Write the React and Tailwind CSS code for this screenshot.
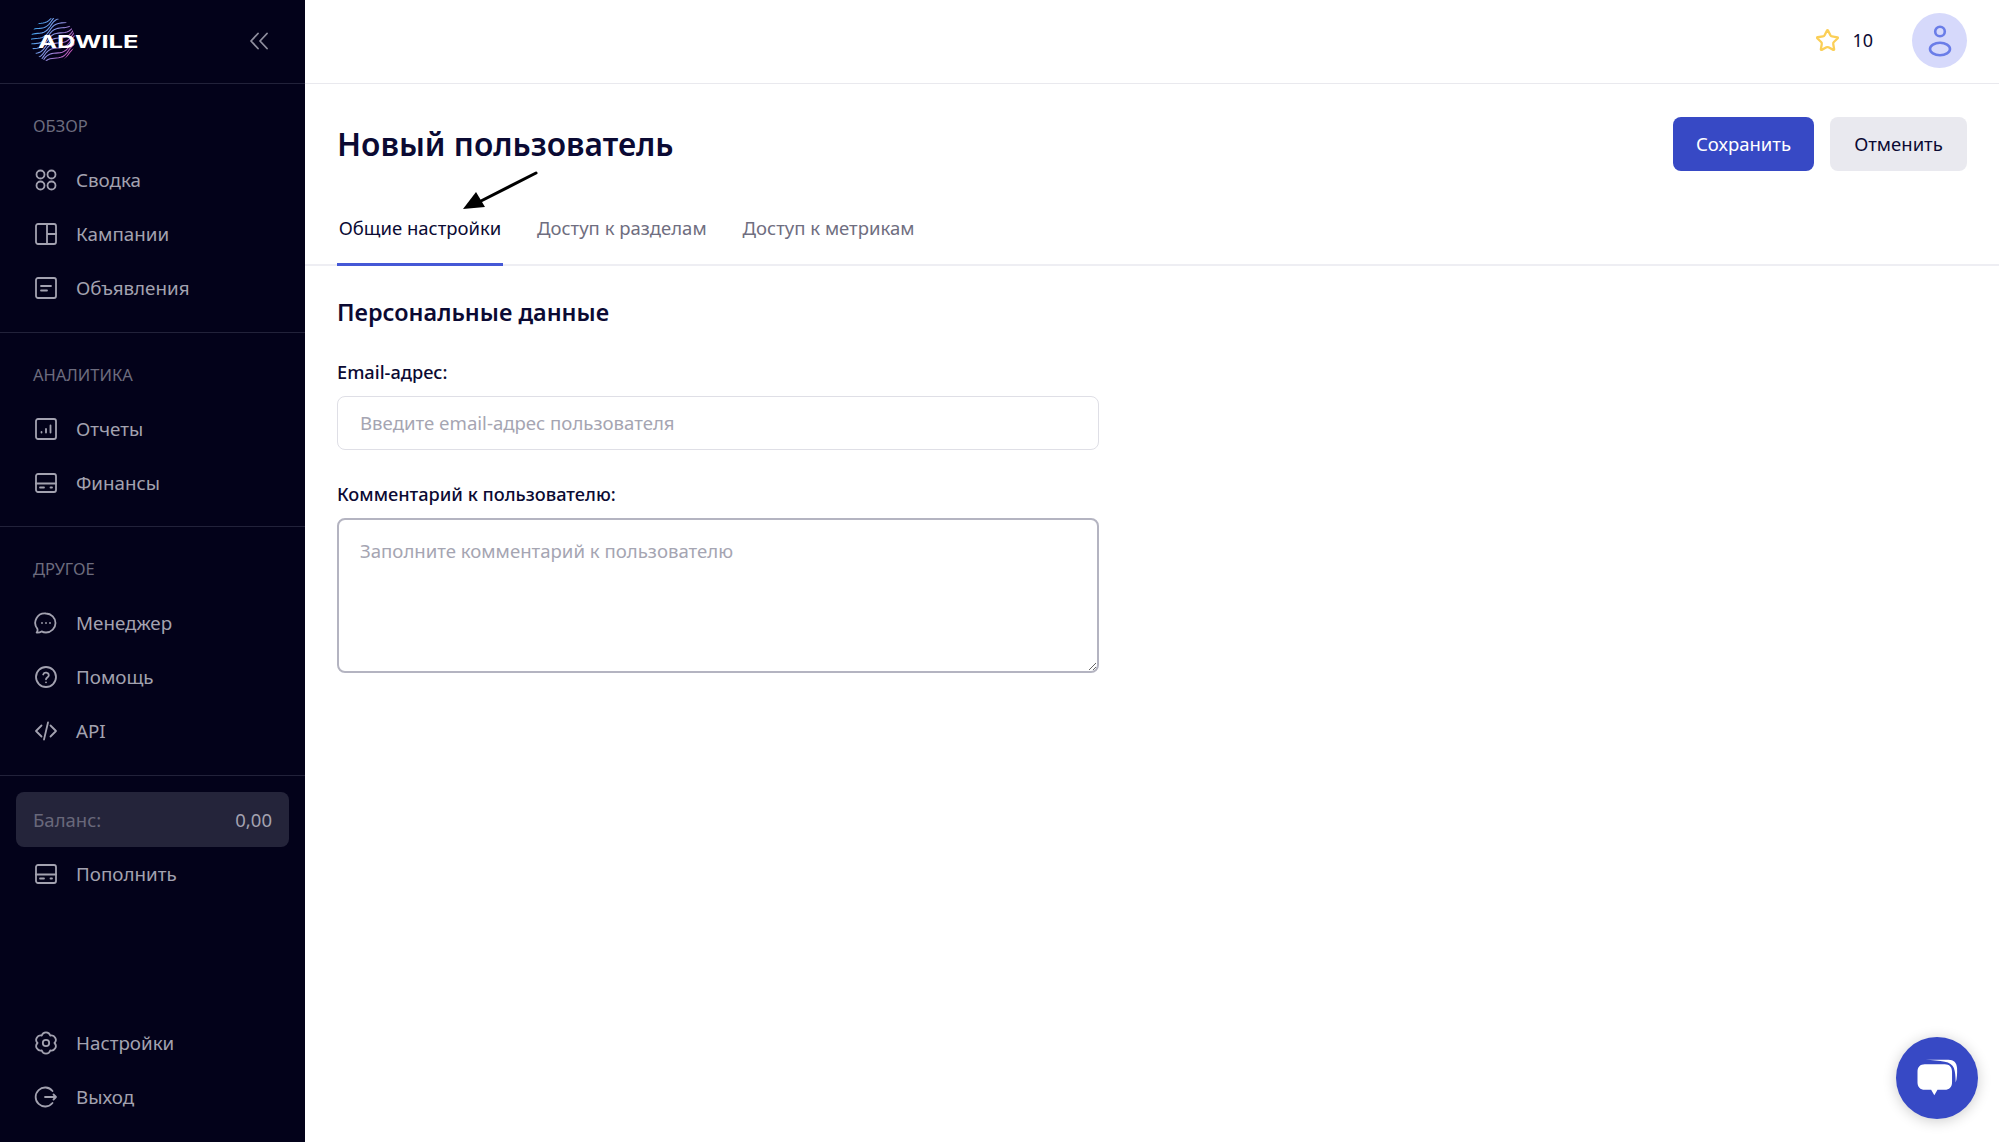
import React from "react";
import { Star } from "lucide-react";

const font = "font-['Noto_Sans',sans-serif]";

function Icon({ children }) {
  return (
    <svg width="24" height="24" viewBox="0 0 24 24" fill="none" stroke="currentColor" strokeWidth="1.8" strokeLinecap="round" strokeLinejoin="round" className="shrink-0">
      {children}
    </svg>
  );
}

// six-lobed outline for the settings icon
function flowerPath() {
  let d = "";
  for (let k = 0; k < 6; k++) {
    const a = ((-60 + 60 * k) * Math.PI) / 180;
    const x = (12 + 8.5 * Math.cos(a)).toFixed(2);
    const y = (12 + 8.5 * Math.sin(a)).toFixed(2);
    d += k === 0 ? `M${x} ${y}` : `A4.4 4.4 0 0 1 ${x} ${y}`;
  }
  const sx = (12 + 8.5 * Math.cos((-60 * Math.PI) / 180)).toFixed(2);
  const sy = (12 + 8.5 * Math.sin((-60 * Math.PI) / 180)).toFixed(2);
  return `${d}A4.4 4.4 0 0 1 ${sx} ${sy}Z`;
}

const icons = {
  summary: (
    <>
      <circle cx="6.5" cy="6.5" r="4" />
      <circle cx="17.5" cy="6.5" r="4" />
      <circle cx="6.5" cy="17.5" r="4" />
      <circle cx="17.5" cy="17.5" r="4" />
    </>
  ),
  campaigns: (
    <>
      <rect x="2" y="2" width="20" height="20" rx="2" />
      <path d="M13 2v20M13 12h9" />
    </>
  ),
  ads: (
    <>
      <rect x="2" y="2" width="20" height="20" rx="2" />
      <path d="M7 10h10M7 14.5h6" />
    </>
  ),
  reports: (
    <>
      <rect x="2" y="2" width="20" height="20" rx="2" />
      <path d="M7.5 15.5v-.5M12 15.5V12M16.5 15.5V8.5" />
    </>
  ),
  card: (
    <>
      <rect x="2" y="3" width="20" height="18" rx="2" />
      <path d="M2 12.5h20M6 16.5h4M16.5 16.5h1.5" />
    </>
  ),
  manager: (
    <>
      <path d="M12 2.5a9.5 9.5 0 0 1 0 19c-1.6 0-3.1-.4-4.4-1.1-1.4.9-3 1.3-5 1.1 1-1.1 1.2-2.3.8-3.6A9.5 9.5 0 0 1 12 2.5Z" />
      <path d="M8 12h.01M12 12h.01M16 12h.01" />
    </>
  ),
  help: (
    <>
      <circle cx="12" cy="12" r="10" />
      <path d="M9.2 9.5a2.9 2.9 0 0 1 5.6.8c0 2-2.8 2.4-2.8 4" />
      <path d="M12 17.3h.01" />
    </>
  ),
  api: <path d="M7.5 6.5 2 12l5.5 5.5M16.5 6.5 22 12l-5.5 5.5M14 3.5 10 20.5" />,
  settings: (
    <>
      <path d={flowerPath()} />
      <circle cx="12" cy="12" r="3.2" />
    </>
  ),
  logout: (
    <>
      <path d="M18.5 6a9.5 9.5 0 1 0 0 12" />
      <path d="M11 12h11M19.5 9.5 22 12l-2.5 2.5" />
    </>
  ),
};

function NavItem({ icon, label }) {
  return (
    <div className="h-[54px] pl-[34px] flex items-center gap-[18px] text-[#a3a2b0] text-[18.8px]">
      <Icon>{icons[icon]}</Icon>
      <span>{label}</span>
    </div>
  );
}

function NavSection({ title, items, tight }) {
  return (
    <div className={`pt-[32px] border-b border-[#22223a] ${tight ? "pb-[16px]" : "pb-[17px]"}`}>
      <div className="pl-[33px] mb-[17px] h-[20px] leading-[20px] text-[16.5px] text-[#6d6c7e]">{title}</div>
      {items.map((item) => (
        <NavItem key={item.label} {...item} />
      ))}
    </div>
  );
}

// the fingerprint mark behind the wordmark
function LogoMark() {
  const lines = [];
  for (let row = 0; row < 14; row++) {
    let d = "";
    for (let x = -26; x <= 26; x += 2) {
      const y = -25 + row * 3.8 + 2.4 * Math.sin(x / 5 + row * 0.7);
      d += (d ? "L" : "M") + x + " " + y.toFixed(1);
    }
    lines.push(d);
  }
  return (
    <svg width="46" height="46" viewBox="-23 -23 46 46" className="absolute left-[30px] top-[17px]">
      <defs>
        <linearGradient id="fp" gradientUnits="userSpaceOnUse" x1="-14" y1="-18" x2="12" y2="22">
          <stop offset="0" stopColor="#3fa3ea" />
          <stop offset="0.5" stopColor="#8d8fe0" />
          <stop offset="1" stopColor="#c446a8" />
        </linearGradient>
        <clipPath id="fpClip">
          <circle cx="0" cy="0" r="22" />
        </clipPath>
      </defs>
      <g clipPath="url(#fpClip)" fill="none" stroke="url(#fp)" strokeWidth="1.1">
        {lines.map((d) => (
          <path key={d} d={d} transform="rotate(-30)" />
        ))}
      </g>
    </svg>
  );
}

function Sidebar() {
  return (
    <aside className="w-[305px] shrink-0 bg-[#03021a] flex flex-col min-h-[1142px]">
      <div className="relative h-[84px] border-b border-[#22223a] flex items-center justify-between pl-[38px] pr-[36px]">
        <LogoMark />
        <span className="relative font-['Inter',sans-serif] font-bold text-[18px] leading-none text-white origin-left scale-x-[1.42]">ADWILE</span>
        <svg width="20" height="18" viewBox="0 0 20 18" fill="none" stroke="#8f8e9e" strokeWidth="1.8" strokeLinecap="round" strokeLinejoin="round" className="mb-[2px]">
          <path d="M9 1.5 2 9l7 7.5M18 1.5 11 9l7 7.5" />
        </svg>
      </div>
      <NavSection
        title="ОБЗОР"
        items={[
          { icon: "summary", label: "Сводка" },
          { icon: "campaigns", label: "Кампании" },
          { icon: "ads", label: "Объявления" },
        ]}
      />
      <NavSection
        tight
        title="АНАЛИТИКА"
        items={[
          { icon: "reports", label: "Отчеты" },
          { icon: "card", label: "Финансы" },
        ]}
      />
      <NavSection
        title="ДРУГОЕ"
        items={[
          { icon: "manager", label: "Менеджер" },
          { icon: "help", label: "Помощь" },
          { icon: "api", label: "API" },
        ]}
      />
      <div className="mt-[16px] mx-[16px] h-[55px] rounded-lg bg-[#24243a] px-[17px] flex items-center justify-between text-[18.5px]">
        <span className="text-[#69687a]">Баланс:</span>
        <span className="text-[#a3a2b0]">0,00</span>
      </div>
      <NavItem icon="card" label="Пополнить" />
      <div className="mt-auto pb-[18px]">
        <NavItem icon="settings" label="Настройки" />
        <NavItem icon="logout" label="Выход" />
      </div>
    </aside>
  );
}

function Field({ label, children }) {
  return (
    <div>
      <div className="text-[18.2px] leading-[24px] font-medium text-[#0b0a33] mb-[12px]">{label}</div>
      {children}
    </div>
  );
}

export default function App() {
  return (
    <div className={`${font} flex bg-white h-[1142px] overflow-hidden`}>
      <Sidebar />
      <main className="relative flex-1 min-w-0">
        <header className="h-[84px] pb-[2px] border-b border-[#e9e9ee] flex items-center justify-end pr-[32px]">
          <Star size={25} strokeWidth={2.2} className="text-[#fbcf57]" />
          <span className="ml-[12px] mr-[39px] text-[18px] text-[#0b0a33]">10</span>
          <div className="w-[55px] h-[55px] rounded-full bg-[#d6d9fb] flex items-center justify-center">
            <svg width="26" height="32" viewBox="0 0 26 32" fill="none" stroke="#6a7de8" strokeWidth="2.6">
              <circle cx="13" cy="6.5" r="4.8" />
              <ellipse cx="13" cy="24" rx="10" ry="6.2" />
            </svg>
          </div>
        </header>

        <div className="pl-[32px] pr-[32px] pt-[33px] flex items-center justify-between">
          <h1 className="text-[31.7px] leading-[54px] font-semibold text-[#0b0a33]">Новый пользователь</h1>
          <div className="flex gap-[16px]">
            <button className="w-[141px] h-[54px] rounded-lg bg-[#3749c5] text-white text-[18.5px]">Сохранить</button>
            <button className="w-[137px] h-[54px] rounded-lg bg-[#e9e9ef] text-[#0b0a33] text-[18.5px]">Отменить</button>
          </div>
        </div>

        <div className="mt-[24px] px-[32px] border-b-2 border-[#eeeef3] flex gap-[34px] h-[71px] text-[18.5px]">
          <div className="relative w-[166px] text-center pt-[19px] text-[#0b0a33]">
            Общие настройки
            <div className="absolute left-0 right-0 bottom-[-2px] h-[3px] bg-[#4558d6]" />
          </div>
          <div className="pt-[19px] text-[#6f6e80]">Доступ к разделам</div>
          <div className="ml-[2px] pt-[19px] text-[#6f6e80]">Доступ к метрикам</div>
        </div>

        <div className="px-[32px] pt-[29px]">
          <h2 className="text-[23.4px] leading-[34px] font-semibold text-[#0b0a33] mb-[31px]">Персональные данные</h2>
          <div className="w-[762px] flex flex-col gap-[32px]">
            <Field label="Email-адрес:">
              <input
                placeholder="Введите email-адрес пользователя"
                className="block w-full h-[54px] rounded-lg border border-[#dfdfe6] px-[22px] pb-[2px] text-[18.6px] placeholder:text-[#a5a5b2] outline-none"
              />
            </Field>
            <Field label="Комментарий к пользователю:">
              <textarea
                placeholder="Заполните комментарий к пользователю"
                className="block w-full h-[155px] rounded-lg border-2 border-[#b4b4c1] px-[21px] py-[17px] text-[18.6px] placeholder:text-[#a5a5b2] outline-none resize-y"
              />
            </Field>
          </div>
        </div>

        {/* annotation arrow drawn over the tabs */}
        <svg width="84" height="46" viewBox="0 0 84 46" className="absolute left-[158px] top-[168px]">
          <path d="M73 5 16 34" stroke="#000" strokeWidth="3" strokeLinecap="round" />
          <path d="M0 41 13 24l9 15Z" fill="#000" />
        </svg>

        {/* chat widget */}
        <button className="absolute right-[21px] bottom-[23px] w-[82px] h-[82px] rounded-full bg-[#3749c5] shadow-[0_2px_14px_rgba(0,0,0,0.2)] flex items-center justify-center">
          <svg width="43" height="40" viewBox="0 0 46 44">
            <path d="M10 2h25c6 0 9 3 9.5 9 .3 5 0 12-1.5 16-.2-7-.5-12-2-16-1.500-4-5-6-10-7-6-1.200-14-1.500-21-2Z" fill="#fff" />
            <path d="M9 7h22c5 0 8 3 8 8v12c0 5-3 8-8 8h-8l-3.500 6-3.500-6H9c-5 0-8-3-8-8V15c0-5 3-8 8-8Z" fill="#fff" />
          </svg>
        </button>
      </main>
    </div>
  );
}
